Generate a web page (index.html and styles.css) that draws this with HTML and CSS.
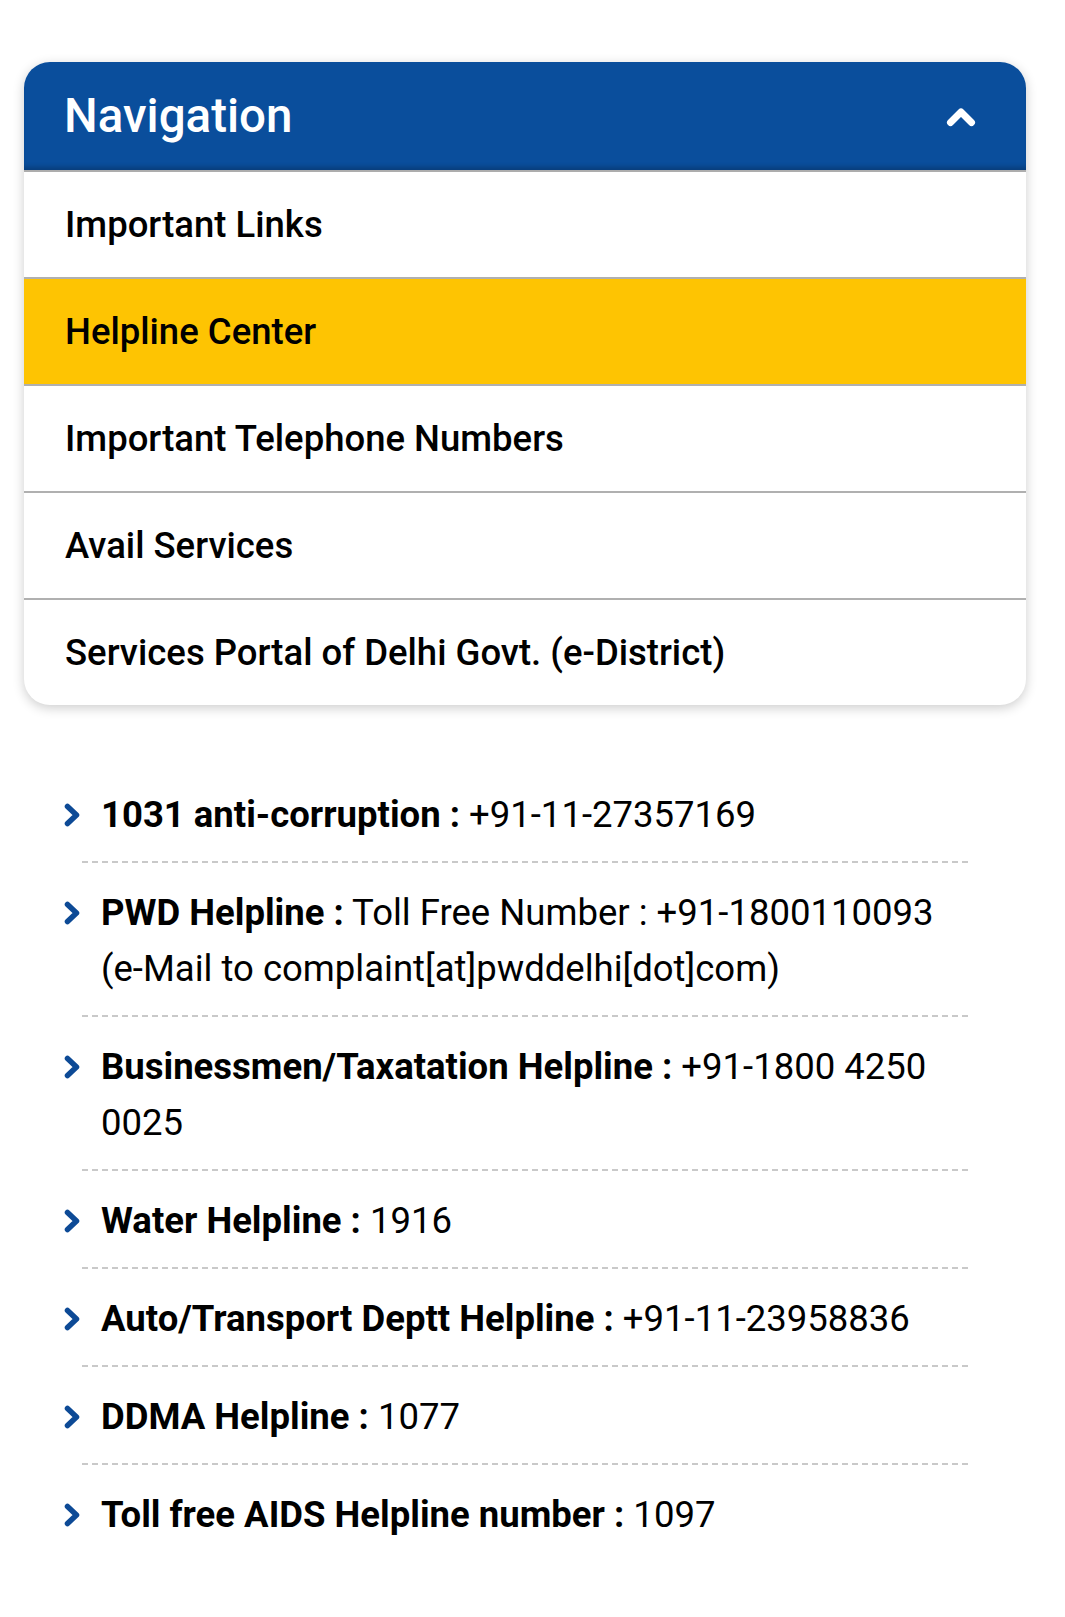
FILE: index.html
```html
<!DOCTYPE html>
<html lang="en">
<head>
    <meta charset="UTF-8">
    <meta name="viewport" content="width=device-width, initial-scale=1.0">
    <title>Helpline Center</title>
    <link rel="stylesheet" href="styles.css">
</head>
<body>
    <div class="nav">
        <div class="nav-head">
            <h2>Navigation</h2>
            <svg class="up" width="30" height="20" viewBox="0 0 30 20">
                <path d="M4.5 15.5 L15 5 L25.5 15.5" fill="none" stroke="#fff" stroke-width="7" stroke-linecap="round" stroke-linejoin="round"/>
            </svg>
        </div>
        <a class="nav-item" href="#">Important Links</a>
        <a class="nav-item active" href="#">Helpline Center</a>
        <a class="nav-item" href="#">Important Telephone Numbers</a>
        <a class="nav-item" href="#">Avail Services</a>
        <a class="nav-item" href="#">Services Portal of Delhi Govt. (e-District)</a>
    </div>

    <ul class="helplines">
        <li><svg class="arrow" viewBox="0 0 16 24"><path d="M3.5 3.5 L12.5 12 L3.5 20.5" fill="none" stroke="#0d4a96" stroke-width="5.5" stroke-linecap="round" stroke-linejoin="round"/></svg><p><b>1031 anti-corruption :</b> +91-11-27357169</p></li>
        <li><svg class="arrow" viewBox="0 0 16 24"><path d="M3.5 3.5 L12.5 12 L3.5 20.5" fill="none" stroke="#0d4a96" stroke-width="5.5" stroke-linecap="round" stroke-linejoin="round"/></svg><p><b>PWD Helpline :</b> Toll Free Number : +91-1800110093 <span class="nowrap">(e-Mail</span> to complaint[at]pwddelhi[dot]com)</p></li>
        <li><svg class="arrow" viewBox="0 0 16 24"><path d="M3.5 3.5 L12.5 12 L3.5 20.5" fill="none" stroke="#0d4a96" stroke-width="5.5" stroke-linecap="round" stroke-linejoin="round"/></svg><p><b>Businessmen/Taxatation Helpline :</b> +91-1800 4250 0025</p></li>
        <li><svg class="arrow" viewBox="0 0 16 24"><path d="M3.5 3.5 L12.5 12 L3.5 20.5" fill="none" stroke="#0d4a96" stroke-width="5.5" stroke-linecap="round" stroke-linejoin="round"/></svg><p><b>Water Helpline :</b> 1916</p></li>
        <li><svg class="arrow" viewBox="0 0 16 24"><path d="M3.5 3.5 L12.5 12 L3.5 20.5" fill="none" stroke="#0d4a96" stroke-width="5.5" stroke-linecap="round" stroke-linejoin="round"/></svg><p><b>Auto/Transport Deptt Helpline :</b> +91-11-23958836</p></li>
        <li><svg class="arrow" viewBox="0 0 16 24"><path d="M3.5 3.5 L12.5 12 L3.5 20.5" fill="none" stroke="#0d4a96" stroke-width="5.5" stroke-linecap="round" stroke-linejoin="round"/></svg><p><b>DDMA Helpline :</b> 1077</p></li>
        <li><svg class="arrow" viewBox="0 0 16 24"><path d="M3.5 3.5 L12.5 12 L3.5 20.5" fill="none" stroke="#0d4a96" stroke-width="5.5" stroke-linecap="round" stroke-linejoin="round"/></svg><p><b>Toll free AIDS Helpline number :</b> 1097</p></li>
    </ul>
</body>
</html>
```

FILE: styles.css
```css
body {
    margin: 0;
    background: #fff;
    font-family: Roboto, "Noto Sans", sans-serif;
    color: #000;
}
.nav {
    width: 1002px;
    margin: 62px 0 0 24px;
    border-radius: 26px;
    background: #fff;
    box-shadow: 0 3px 12px rgba(0, 0, 0, 0.2);
    overflow: hidden;
}
.nav-head {
    height: 108px;
    background: #0a4e9c;
    box-shadow: inset 0 -6px 5px -3px rgba(0, 0, 0, 0.22);
    display: flex;
    align-items: center;
    justify-content: space-between;
    padding: 0 50px 0 40px;
    border-bottom: 2px solid #adadad;
}
.nav-head h2 {
    margin: 0;
    color: #fff;
    font-size: 47.5px;
    font-weight: 500;
}
.up {
    margin-top: 2px;
}
.nav-item {
    display: flex;
    align-items: center;
    height: 105px;
    padding-left: 41px;
    font-size: 36.5px;
    font-weight: 500;
    color: #000;
    text-decoration: none;
    border-top: 2px solid #b0b0b0;
}
.nav-item:nth-of-type(1) {
    border-top: none;
}
.nav-item.active {
    background: #fec402;
}
.helplines {
    list-style: none;
    width: 886px;
    margin: 60px 0 0 82px;
    padding: 0;
}
.helplines li {
    display: flex;
    align-items: flex-start;
    padding: 22px 0 20px;
    background: repeating-linear-gradient(90deg, #c9c9c9 0 6px, transparent 6px 10px) left bottom / 100% 2px no-repeat;
}
.helplines li:last-child {
    background: none;
}
.arrow {
    flex: none;
    width: 16px;
    height: 24px;
    margin: 16px 21px 0 -18px;
}
.helplines p {
    margin: 0;
    font-size: 36.5px;
    line-height: 56px;
}
.helplines b {
    font-weight: 700;
}
.nowrap {
    white-space: nowrap;
}
```
